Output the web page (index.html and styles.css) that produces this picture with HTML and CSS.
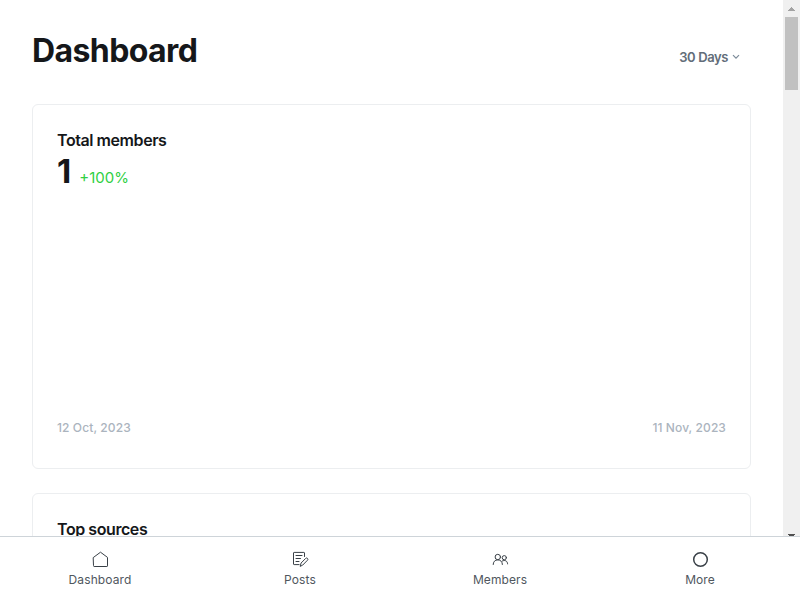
FILE: index.html
```html
<!DOCTYPE html>
<html lang="en">
<head>
<meta charset="utf-8">
<title>Dashboard</title>
<link rel="stylesheet" href="styles.css">
</head>
<body>
<div class="viewport">
  <main class="content">
    <header class="header">
      <h1 class="title">Dashboard</h1>
      <button class="period"><span>30 Days</span>
        <svg class="chevron" viewBox="0 0 8 6"><path d="M1 1.2l3 3 3-3"/></svg>
      </button>
    </header>
    <section class="card chart">
      <h2 class="card-title">Total members</h2>
      <div class="metric"><span class="value">1</span><span class="trend">+100%</span></div>
      <div class="dates"><span>12 Oct, 2023</span><span>11 Nov, 2023</span></div>
    </section>
    <section class="card">
      <h2 class="card-title">Top sources</h2>
    </section>
  </main>
  <div class="scrollbar">
    <svg class="arrow" viewBox="0 0 17 17" shape-rendering="crispEdges"><path d="M8 7h1v1h1v1h1v1h1v1H5v-1h1V9h1V8h1z"/></svg>
    <div class="thumb"></div>
    <svg class="arrow arrow-down" viewBox="0 0 17 17" shape-rendering="crispEdges"><path d="M5 15h7v1h-1v1H6v-1H5z"/></svg>
  </div>
</div>
<nav class="nav">
  <a class="item"><svg class="icon" viewBox="0 0 16 16"><path d="M1.5 6.4L8.5 1.2l7 5.2v8.5a.6.6 0 0 1-.6.6H2.1a.6.6 0 0 1-.6-.6z"/></svg><span>Dashboard</span></a>
  <a class="item"><svg class="icon" viewBox="0 0 16 16"><path d="M12.5 5.5V2a.6.6 0 0 0-.6-.6H2.1a.6.6 0 0 0-.6.6v11a.6.6 0 0 0 .6.6h5M4 4.5h6M4 7.5h4.5M4 10.5h3M8.3 15l.8-3 4.6-4.6a1.2 1.2 0 0 1 1.8 1.8L11 13.8z"/></svg><span>Posts</span></a>
  <a class="item"><svg class="icon" viewBox="0 0 16 16"><circle cx="5.8" cy="6" r="2.7"/><path d="M1.2 13.5c0-2.8 1.8-4.6 4.6-4.6s4.6 1.8 4.6 4.6M10.3 10c2.8-1.5 5.3.1 5.3 2.9"/><circle cx="12.3" cy="6.7" r="2.1"/></svg><span>Members</span></a>
  <a class="item"><svg class="icon more" viewBox="0 0 16 16"><circle cx="8.5" cy="8.5" r="6.8"/></svg><span>More</span></a>
</nav>
</body>
</html>
```
FILE: styles.css
```css
* { box-sizing: border-box; }
body {
  margin: 0;
  height: 600px;
  overflow: hidden;
  display: flex;
  flex-direction: column;
  background: #fff;
  color: #15171a;
  font-family: Inter, sans-serif;
}
h1, h2 { margin: 0; }
.viewport { height: 536px; display: flex; overflow: hidden; }
.content { flex: 1; padding: 0 32px; overflow: hidden; }
.header {
  height: 104px;
  padding: 30px 11px 0 0;
  display: flex;
  justify-content: space-between;
  align-items: flex-start;
}
.title { margin-top: 1px; font-size: 32px; line-height: 40px; font-weight: 700; letter-spacing: -0.6px; }
.period {
  display: flex;
  align-items: center;
  gap: 4px;
  margin-top: 17px;
  padding: 0;
  border: 0;
  background: none;
  color: #626d79;
  font: 600 13px/20px Inter, sans-serif;
  letter-spacing: -0.4px;
}
.chevron { width: 8px; height: 6px; fill: none; stroke: #7c8b9a; stroke-width: 1.2; }
.card {
  height: 365px;
  margin-bottom: 24px;
  padding: 23px 24px 24px;
  border: 1px solid #eceef0;
  border-radius: 6px;
}
.chart { display: flex; flex-direction: column; }
.card-title { font-size: 16px; line-height: 24px; font-weight: 600; letter-spacing: -0.43px; }
.metric { display: flex; align-items: baseline; gap: 8px; height: 40px; }
.value { font-size: 33px; line-height: 39px; font-weight: 700; }
.trend { color: #30cf43; font-size: 15px; }
.dates {
  display: flex;
  justify-content: space-between;
  margin-top: auto;
  margin-bottom: 6px;
  color: #abb4be;
  font-size: 12px;
  line-height: 20px;
  font-weight: 500;
  letter-spacing: 0.1px;
}
.scrollbar { width: 17px; display: flex; flex-direction: column; align-items: center; background: #f0f0f0; }
.arrow { display: block; width: 17px; height: 17px; flex: none; fill: #a3a3a3; }
.arrow-down { margin-top: auto; fill: #505050; }
.thumb { width: 13px; height: 73px; background: #c1c1c1; }
.nav { height: 64px; display: grid; grid-template-columns: repeat(4, 1fr); border-top: 1px solid #ced4d9; }
.item { display: flex; flex-direction: column; align-items: center; padding-top: 14px; color: #50575e; font-size: 12px; line-height: 16px; letter-spacing: 0.1px; }
.item span { margin-top: 5px; }
.icon { width: 16px; height: 16px; overflow: visible; fill: none; stroke: #394047; stroke-width: 1; stroke-linecap: round; stroke-linejoin: round; }
.more { stroke-width: 1.5; }
```
